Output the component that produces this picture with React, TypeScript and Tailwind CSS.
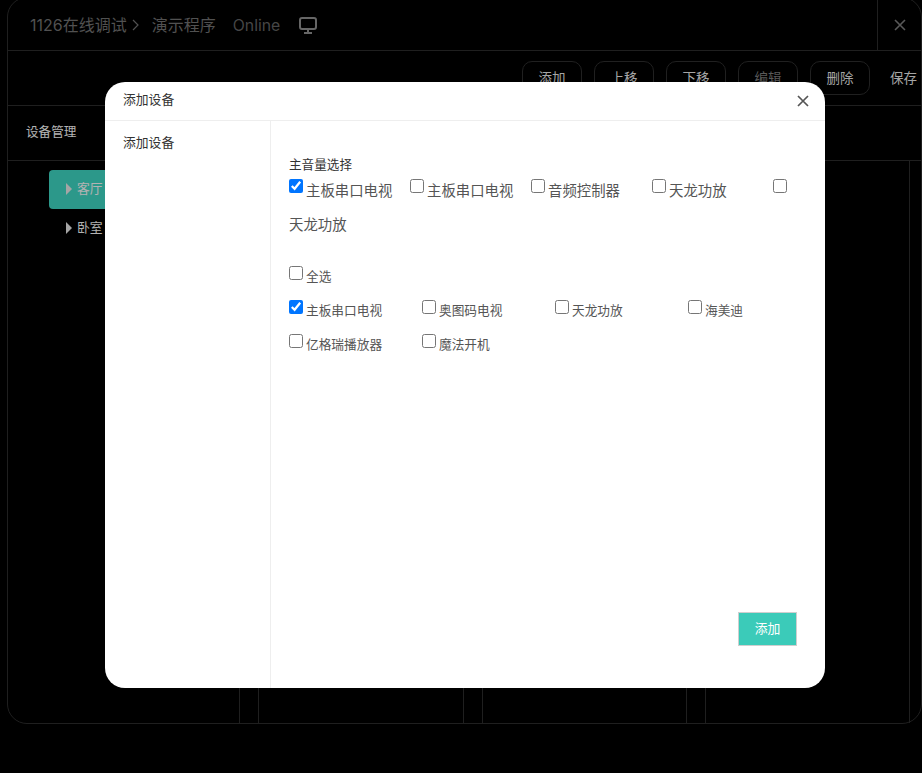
import React from "react";

const font = "font-['Inter','Noto_Sans_CJK_SC',sans-serif]";

function Tb({ t, dim }: { t: string; dim?: boolean }) {
  return (
    <button className={`w-[60px] h-[34px] rounded-[10px] border border-[#2b2b2b] text-[13.5px] ${dim ? "text-[#777]" : "text-[#dcdcdc]"}`}>
      {t}
    </button>
  );
}

function Inline({ t, checked }: { t: string; checked?: boolean }) {
  return (
    <>
      <input type="checkbox" defaultChecked={checked} className="w-[14px] h-[14px] mt-[5px] mr-[3px] align-top" />
      <span className="inline-block w-[104px] text-[14.4px] text-[#555]">{t}</span>
    </>
  );
}

function GridItem({ t, checked }: { t: string; checked?: boolean }) {
  return (
    <label className="h-[34px] whitespace-nowrap text-[12.7px] text-[#555]">
      <input type="checkbox" defaultChecked={checked} className="w-[14px] h-[14px] mt-[6px] mr-[3px] align-top" />
      {t}
    </label>
  );
}

function Column({ w }: { w: string }) {
  return <div className={`${w} border-r border-[#2a2a2a] shrink-0`} />;
}

export default function App() {
  return (
    <div className={`relative h-screen w-full overflow-hidden bg-black ${font}`}>
      <div className="ml-[7px] mt-[-3px] w-[915px] h-[727px] rounded-[20px] border border-[#2a2a2a] flex flex-col">
        <div className="h-[53px] shrink-0 flex items-center border-b border-[#2a2a2a] pt-[2px] text-[16px] text-[#6c6c6c]">
          <span className="ml-[22px]">1126在线调试</span>
          <span className="ml-[5px]">
            <svg width="8" height="12" viewBox="0 0 8 12" fill="none" stroke="currentColor" strokeWidth="1.2"><path d="M1 1l5 5-5 5" /></svg>
          </span>
          <span className="ml-[12px]">演示程序</span>
          <span className="ml-[17px] pt-[1px] text-[15.8px] text-[#5e5e5e]">Online</span>
          <svg className="ml-[18px] text-[#888]" width="20" height="19" viewBox="0 0 20 19" fill="none" stroke="currentColor" strokeWidth="2">
            <rect x="2" y="2" width="16" height="11" rx="2" />
            <path d="M10 13v3M6 17h8" />
          </svg>
          <div className="ml-auto w-[44px] h-full border-l border-[#2a2a2a] flex items-center justify-center text-[#777]">
            <svg width="12" height="12" viewBox="0 0 12 12" stroke="currentColor" strokeWidth="1.6"><path d="M1 1l10 10M11 1L1 11" /></svg>
          </div>
        </div>
        <div className="h-[55px] shrink-0 border-b border-[#2a2a2a] flex items-center justify-end gap-[12px] pr-[5px] text-[13.5px]">
          <Tb t="添加" />
          <Tb t="上移" />
          <Tb t="下移" />
          <Tb t="编辑" dim />
          <Tb t="删除" />
          <span className="ml-[8px] w-[26px] whitespace-nowrap text-[#dcdcdc]">保存</span>
        </div>
        <div className="h-[55px] shrink-0 border-b border-[#2a2a2a] flex items-center pl-[18px] pb-[2px] text-[12.6px] text-[#f0f0f0]">设备管理</div>
        <div className="flex-1 flex min-h-0">
          <div className="w-[232px] shrink-0 border-r border-[#2a2a2a] pl-[41px] pt-[9px] text-[12.8px]">
            <div className="h-[39px] rounded-[4px] bg-[#3bcbb9] flex items-center pl-[17px] pb-[2px] text-[#eee]">
              <span className="w-0 h-0 border-y-[6px] border-y-transparent border-l-[6px] border-l-[#ddd] mr-[5px]" />客厅
            </div>
            <div className="h-[39px] flex items-center pl-[17px] pb-[1px] text-[#eee]">
              <span className="w-0 h-0 border-y-[6px] border-y-transparent border-l-[6px] border-l-[#ddd] mr-[5px]" />卧室
            </div>
          </div>
          <div className="w-[19px] shrink-0 border-r border-[#2a2a2a]" />
          <Column w="w-[205px]" />
          <Column w="w-[19px]" />
          <Column w="w-[204px]" />
          <Column w="w-[19px]" />
          <Column w="w-[204px]" />
        </div>
      </div>

      <div className="absolute inset-0 bg-black/25" />

      <div className="absolute left-[105px] top-[82px] w-[720px] h-[606px] rounded-[20px] bg-white flex flex-col overflow-hidden">
        <div className="h-[39px] shrink-0 border-b border-[#eeeeee] flex items-center justify-between pl-[18px] pr-[16px] text-[12.8px] text-[#333]">
          <span className="mb-[2px]">添加设备</span>
          <svg width="12" height="12" viewBox="0 0 12 12" stroke="#555" strokeWidth="1.7"><path d="M1 1l10 10M11 1L1 11" /></svg>
        </div>
        <div className="flex-1 flex min-h-0">
          <div className="w-[166px] shrink-0 border-r border-[#eeeeee] pl-[18px] pt-[12px] text-[12.8px] text-[#333]">添加设备</div>
          <div className="flex-1 min-w-0 flex flex-col pl-[18px] pr-[18px] pt-[34px] pb-[42px]">
            <div className="h-[19px] text-[12.6px] leading-[19px] text-[#333]">主音量选择</div>
            <div className="leading-[34px] text-[14px]">
              <Inline t="主板串口电视" checked />
              <Inline t="主板串口电视" />
              <Inline t="音频控制器" />
              <Inline t="天龙功放" />
              <Inline t="天龙功放" />
            </div>
            <label className="mt-[18px] h-[34px] text-[12.7px] leading-[34px] text-[#555]">
              <input type="checkbox" className="w-[14px] h-[14px] mt-[6px] mr-[3px] align-top" />全选
            </label>
            <div className="grid grid-cols-[repeat(4,133px)] leading-[34px]">
              <GridItem t="主板串口电视" checked />
              <GridItem t="奥图码电视" />
              <GridItem t="天龙功放" />
              <GridItem t="海美迪" />
              <GridItem t="亿格瑞播放器" />
              <GridItem t="魔法开机" />
            </div>
            <button className="mt-auto self-end mr-[10px] w-[59px] h-[34px] bg-[#3bcbb9] border border-[#cfcfcf] text-[12.8px] text-white">添加</button>
          </div>
        </div>
      </div>
    </div>
  );
}
